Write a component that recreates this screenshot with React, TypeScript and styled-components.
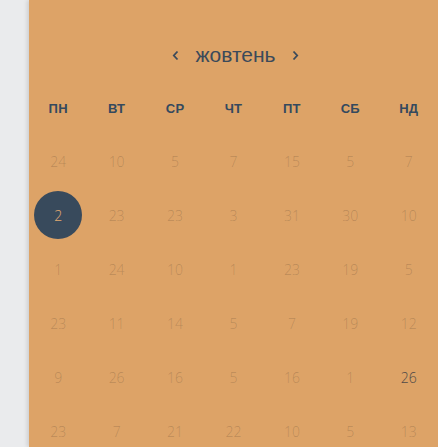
import styled, { createGlobalStyle } from 'styled-components'

const GlobalStyle = createGlobalStyle`
  html, body { margin: 0; padding: 0; background: #eaebed; }
  body { font-family: "Liberation Sans", Arial, sans-serif; overflow: hidden; }
`

const Page = styled.div`
  display: flex;
  height: 447px;
  overflow: hidden;
  background: #eaebed;
`

const Panel = styled.div`
  margin-left: 29px;
  flex: 1;
  background: #dda367;
  box-shadow: -2px 0 4px rgba(0, 0, 0, 0.12);
  padding-top: 28px;
  display: flex;
  flex-direction: column;
  & > * { flex-shrink: 0; }
`

const Header = styled.div`
  height: 54px;
  display: flex;
  align-items: center;
  justify-content: center;
  gap: 16px;
  color: #3b4a5a;
  font-family: "Liberation Sans", Arial, sans-serif;
  font-size: 21px;
  padding-left: 4px;
`

const Arrow = styled.span`
  display: flex;
  align-items: center;
  cursor: pointer;
`

const Grid = styled.div`
  display: grid;
  grid-template-columns: repeat(7, 1fr);
  grid-template-rows: 52px;
  grid-auto-rows: 54px;
`

const WeekDay = styled.div`
  display: flex;
  align-items: center;
  justify-content: center;
  font-size: 13px;
  font-weight: 700;
  color: #34495e;
  letter-spacing: 0.3px;
`

const Cell = styled.div`
  display: flex;
  align-items: center;
  justify-content: center;
`

const Day = styled.div<{ $active?: boolean; $mark?: boolean }>`
  width: 48px;
  height: 48px;
  border-radius: 50%;
  display: flex;
  align-items: center;
  justify-content: center;
  font-family: "Open Sans", "Liberation Sans", sans-serif;
  font-weight: 300;
  font-size: 14px;
  background: ${p => (p.$active ? '#384a5c' : 'transparent')};
  color: ${p => (p.$active ? '#e3ab72' : p.$mark ? '#4f4a47' : 'rgba(80, 60, 40, 0.26)')};
`

const weekDays = ['пн', 'вт', 'ср', 'чт', 'пт', 'сб', 'нд']

const days = [
  [24, 10, 5, 7, 15, 5, 7],
  [2, 23, 23, 3, 31, 30, 10],
  [1, 24, 10, 1, 23, 19, 5],
  [23, 11, 14, 5, 7, 19, 12],
  [9, 26, 16, 5, 16, 1, 26],
  [23, 7, 21, 22, 10, 5, 13],
]

const Chevron = ({ dir }: { dir: 'left' | 'right' }) => (
  <svg width="7" height="11" viewBox="0 0 7 11">
    <path
      d={dir === 'left' ? 'M5.5 1.5 L1.8 5.5 L5.5 9.5' : 'M1.5 1.5 L5.2 5.5 L1.5 9.5'}
      fill="none"
      stroke="#3b4a5a"
      strokeWidth="1.8"
    />
  </svg>
)

export default function App() {
  return (
    <Page>
      <GlobalStyle />
      <Panel>
        <Header>
          <Arrow><Chevron dir="left" /></Arrow>
          <span>жовтень</span>
          <Arrow><Chevron dir="right" /></Arrow>
        </Header>
        <Grid>
          {weekDays.map(d => (
            <WeekDay key={d}>{d.toUpperCase()}</WeekDay>
          ))}
          {days.map((row, r) =>
            row.map((n, c) => (
              <Cell key={`${r}-${c}`}>
                <Day $active={r === 1 && c === 0} $mark={r === 4 && c === 6}>
                  {n}
                </Day>
              </Cell>
            ))
          )}
        </Grid>
      </Panel>
    </Page>
  )
}
